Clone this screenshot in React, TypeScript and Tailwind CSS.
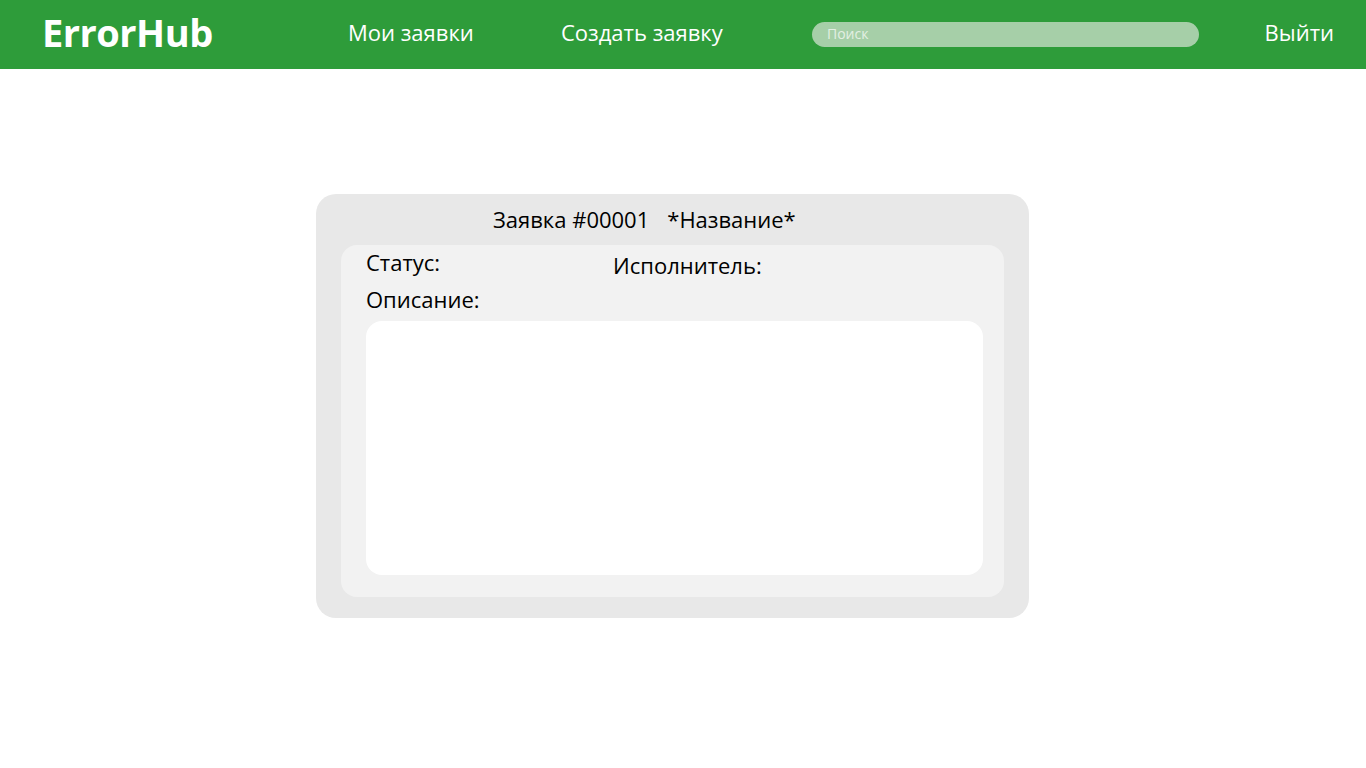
import React from "react";

const font = { fontFamily: '"Open Sans", "Noto Sans", sans-serif' };

function Header() {
  return (
    <header className="flex h-[69px] items-center bg-[#2e9c3a] text-white">
      <div className="mb-[6px] ml-[42px] w-[306px] text-[38px] font-bold leading-none tracking-[-0.5px]">
        ErrorHub
      </div>
      <nav className="mb-[5px] flex items-center">
        <a className="w-[213px] text-[22px] leading-none">Мои заявки</a>
        <a className="w-[251px] text-[22px] leading-none">Создать заявку</a>
      </nav>
      <div className="flex h-[25px] w-[387px] items-center rounded-full bg-[#a6cfa8] pl-[15px]">
        <input
          placeholder="Поиск"
          className="mb-[2px] w-full bg-transparent text-[14px] text-white outline-none placeholder:text-[#e3efe3]"
        />
      </div>
      <a className="mb-[5px] ml-auto mr-[32px] text-[22px] leading-none">Выйти</a>
    </header>
  );
}

function TicketCard() {
  return (
    <div className="ml-[316px] mt-[125px] flex h-[424px] w-[713px] flex-col rounded-[20px] bg-[#e8e8e8] px-[25px] pb-[21px]">
      <div className="flex h-[51px] items-center pl-[152px] text-[22px] text-black">
        <span>Заявка #00001</span>
        <span className="ml-[18px]">*Название*</span>
      </div>
      <div className="flex flex-1 flex-col rounded-[16px] bg-[#f2f2f2] pb-[22px] pl-[25px] pr-[21px]">
        <div className="flex h-[39px] items-start pt-[1px] text-[22px] text-black">
          <span className="w-[247px]">Статус:</span>
          <span className="mt-[3px]">Исполнитель:</span>
        </div>
        <div className="h-[37px] text-[22px] leading-[30px] text-black">Описание:</div>
        <div className="flex-1 rounded-[16px] bg-white" />
      </div>
    </div>
  );
}

export default function App() {
  return (
    <div className="min-h-[768px] bg-white" style={font}>
      <Header />
      <TicketCard />
    </div>
  );
}
